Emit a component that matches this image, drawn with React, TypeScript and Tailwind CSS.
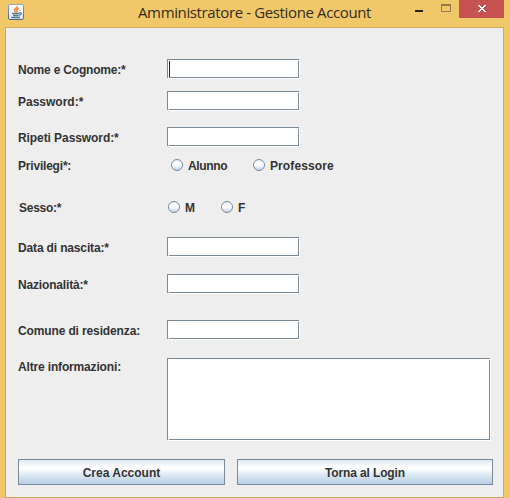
import type { ReactNode } from 'react';

function JavaIcon() {
  return (
    <svg width="16" height="16" viewBox="0 0 16 16" fill="none">
      <defs>
        <linearGradient id="javaBg" x1="0" y1="0" x2="0" y2="1">
          <stop offset="0" stopColor="#ffffff" />
          <stop offset="1" stopColor="#dfe6ea" />
        </linearGradient>
        <linearGradient id="javaRim" x1="0" y1="0" x2="0" y2="1">
          <stop offset="0" stopColor="#9ba6a6" />
          <stop offset="1" stopColor="#4d6a85" />
        </linearGradient>
      </defs>
      <rect x="0.5" y="0.5" width="15" height="15" rx="1.5" fill="url(#javaBg)" stroke="url(#javaRim)" />
      <path d="M9.300 2C9.800 4 6.300 4.600 6.500 6.200C6.600 7 7.500 7.300 7.600 8.500M10.800 4.300C9 5 8.200 5.600 8.800 6.400C9.300 7.100 9.200 7.700 8.500 8.300" stroke="#ee8131" strokeWidth="1.400" />
      <path d="M4 9.500H11M5 11.500H10.500M3.200 13.500H12" stroke="#557b95" strokeWidth="1.300" />
      <path d="M11 8.900C14 7.900 14.200 10.700 11 11.400" stroke="#557b95" strokeWidth="1.200" />
    </svg>
  );
}

function TitleBar() {
  return (
    <header className="relative flex h-[27px] items-start justify-end">
      <div className="absolute left-2 top-1">
        <JavaIcon />
      </div>
      <h1 className="absolute left-[138px] top-0 whitespace-nowrap font-['Open_Sans','Noto_Sans',sans-serif] text-[15px] leading-[24px] tracking-[-0.37px] text-[#332d20]">
        Amministratore - Gestione Account
      </h1>
      <svg width="40" height="17" viewBox="0 0 40 17" shapeRendering="crispEdges" className="mr-[4px]">
        <path d="M0 10h8v2H0z" fill="#222" />
        <path d="M26 4h10v8H26zM27 6v5h8V6z" fill="#94794a" fillRule="evenodd" />
      </svg>
      <div className="mr-[6px] h-[18px] w-[45px] bg-[#c75050] pl-[19px] pt-[5px]">
        <svg width="8" height="7" viewBox="0 0 8 7" shapeRendering="crispEdges" fill="#fff">
          <path d="M0 0h2v1h1v1h2V1h1V0h2v1H7v1H6v1H5v1h1v1h1v1h1v1H6V6H5V5H3v1H2v1H0V6h1V5h1V4h1V3H2V2H1V1H0z" />
        </svg>
      </div>
    </header>
  );
}

function TextBox({ size, caret }: { size: string; caret?: boolean }) {
  return (
    <div className={`relative shrink-0 border border-[#7a8a99] bg-white shadow-[1px_1px_0_0_#ffffff] ${size}`}>
      <span className="absolute -right-px top-0 h-px w-px bg-[#eeeeee]" />
      <span className="absolute -bottom-px left-0 h-px w-px bg-[#eeeeee]" />
      {caret && <span className="absolute left-px top-px h-4 w-px bg-[#222]" />}
    </div>
  );
}

function Row({ label, tracking, gap, children }: { label: string; tracking: string; gap: string; children: ReactNode }) {
  return (
    <div className={`flex items-start ${gap}`}>
      <span className={`h-[19px] w-[149px] shrink-0 whitespace-nowrap leading-[22px] ${tracking}`}>{label}</span>
      {children}
    </div>
  );
}

function Radio({ label, className }: { label: string; className: string }) {
  return (
    <label className={`flex h-[19px] items-start gap-[5px] ${className}`}>
      <svg width="12" height="12" viewBox="0 0 12 12" className="mt-1">
        <defs>
          <linearGradient id={`radio${label}`} x1="0" y1="0" x2="0" y2="1">
            <stop offset="0" stopColor="#dde8f3" />
            <stop offset="0.3" stopColor="#ffffff" />
            <stop offset="0.5" stopColor="#ffffff" />
            <stop offset="1" stopColor="#b8cfe5" />
          </linearGradient>
        </defs>
        <circle cx="6" cy="6" r="5.5" fill={`url(#radio${label})`} stroke="#7a8a99" />
      </svg>
      <span className="leading-[22px]">{label}</span>
    </label>
  );
}

function Button({ width, children }: { width: string; children: ReactNode }) {
  return (
    <button className={`h-[26px] border border-[#7a8a99] bg-[linear-gradient(to_bottom,#dde8f3_0%,#ffffff_30%,#ffffff_36%,#dde8f3_62%,#b8cfe5_100%)] leading-[26px] ${width}`}>
      {children}
    </button>
  );
}

const field = 'h-[19px] w-[132px]';

export default function App() {
  return (
    <div className="h-[498px] w-[510px] overflow-hidden bg-[#f0c869]">
      <TitleBar />
      <main className="ml-[5px] h-[471px] w-[499px] border border-[#cdaa59] bg-[#eeeeee] pl-3 font-['Liberation_Sans',Arial,sans-serif] text-[12px] font-bold text-[#333333]">
        <Row label="Nome e Cognome:*" tracking="tracking-[-0.2px]" gap="mt-[31px]"><TextBox size={field} caret /></Row>
        <Row label="Password:*" tracking="" gap="mt-[13px]"><TextBox size={field} /></Row>
        <Row label="Ripeti Password:*" tracking="tracking-[-0.08px]" gap="mt-[17px]"><TextBox size={field} /></Row>
        <Row label="Privilegi*:" tracking="tracking-[-0.2px]" gap="mt-[9px]">
          <Radio label="Alunno" className="ml-1 w-[82px] tracking-[-0.33px]" />
          <Radio label="Professore" className="tracking-[0.1px]" />
        </Row>
        <Row label="Sesso:*" tracking="pl-px tracking-[-0.25px]" gap="mt-[23px]">
          <Radio label="M" className="ml-px w-[53px]" />
          <Radio label="F" className="" />
        </Row>
        <Row label="Data di nascita:*" tracking="tracking-[-0.15px]" gap="mt-[21px]"><TextBox size={field} /></Row>
        <Row label="Nazionalità:*" tracking="tracking-[-0.17px]" gap="mt-[18px]"><TextBox size={field} /></Row>
        <Row label="Comune di residenza:" tracking="tracking-[-0.13px]" gap="mt-[27px]"><TextBox size={field} /></Row>
        <div className="mt-[19px] flex items-start">
          <span className="w-[149px] shrink-0 leading-[18px] tracking-[-0.16px]">Altre informazioni:</span>
          <TextBox size="h-[82px] w-[323px]" />
        </div>
        <div className="mt-[19px] flex gap-3">
          <Button width="w-[207px]">Crea Account</Button>
          <Button width="w-[256px] tracking-[-0.13px]">Torna al Login</Button>
        </div>
      </main>
    </div>
  );
}
